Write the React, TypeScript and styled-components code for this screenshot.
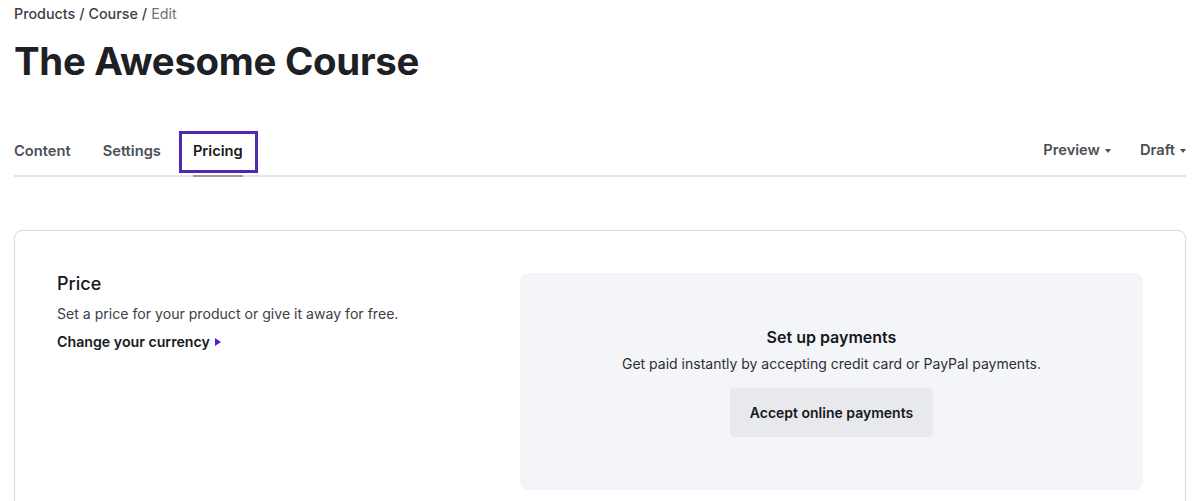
import styled, { createGlobalStyle } from "styled-components";

const GlobalStyle = createGlobalStyle`
  body {
    margin: 0;
    background: #ffffff;
    font-family: Inter, "Noto Sans", sans-serif;
    color: #1d2125;
  }
`;

const Page = styled.div`
  padding: 6px 14px 0;
`;

const Breadcrumb = styled.nav`
  display: flex;
  gap: 4px;
  font-size: 14.3px;
  line-height: 16px;
  font-weight: 500;
  color: #3c4046;
`;

const Crumb = styled.span<{ $current?: boolean }>`
  color: ${(p) => (p.$current ? "#6d7177" : "#3c4046")};
  font-weight: ${(p) => (p.$current ? 400 : 500)};
`;

const Title = styled.h1`
  margin: 17px 0 0;
  font-size: 38.4px;
  line-height: 44px;
  font-weight: 700;
  letter-spacing: -0.3px;
  color: #1d2125;
`;

const TabBar = styled.div`
  margin-top: 48px;
  display: flex;
  justify-content: space-between;
  align-items: stretch;
  border-bottom: 2px solid #e3e5e8;
`;

const TabList = styled.div`
  display: flex;
  gap: 32px;
`;

const Tab = styled.button<{ $active?: boolean }>`
  position: relative;
  border: none;
  background: none;
  padding: 10px 0 16px;
  margin-bottom: -2px;
  font-family: inherit;
  font-size: 14.7px;
  line-height: 18px;
  font-weight: 600;
  color: ${(p) => (p.$active ? "#16191c" : "#4a4f55")};
  cursor: pointer;

  &::after {
    content: "";
    display: ${(p) => (p.$active ? "block" : "none")};
    position: absolute;
    left: 0;
    right: 0;
    bottom: 0;
    height: 2px;
    background: #9a9da1;
  }

  &::before {
    content: "";
    display: ${(p) => (p.$active ? "block" : "none")};
    position: absolute;
    left: -14px;
    right: -15px;
    top: 0;
    bottom: 4px;
    border: 3px solid #5128b4;
  }
`;

const Menus = styled.div`
  display: flex;
  gap: 29px;
`;

const Menu = styled.button`
  display: flex;
  align-items: center;
  gap: 5px;
  border: none;
  background: none;
  padding: 10px 0 16px;
  font-family: inherit;
  font-size: 14.7px;
  line-height: 18px;
  font-weight: 600;
  color: #4a4f55;
  cursor: pointer;
`;

const Caret = styled.span`
  width: 0;
  height: 0;
  border-left: 3.5px solid transparent;
  border-right: 3.5px solid transparent;
  border-top: 4px solid #4a4f55;
  margin-top: 2px;
`;

const Card = styled.section`
  margin-top: 53px;
  border: 1px solid #d6d9dd;
  border-radius: 8px;
  padding: 42px 42px;
  display: grid;
  grid-template-columns: 1fr 623px;
  gap: 40px;
`;

const Info = styled.div`
  display: flex;
  flex-direction: column;
`;

const SectionTitle = styled.h2`
  margin: 0;
  font-size: 18px;
  line-height: 22px;
  font-weight: 500;
  color: #16191c;
`;

const Description = styled.p`
  margin: 9px 0 0;
  font-size: 14.1px;
  line-height: 20px;
  color: #3c4046;
`;

const TextLink = styled.a`
  margin-top: 8px;
  display: inline-flex;
  align-items: center;
  gap: 5px;
  font-size: 14.2px;
  line-height: 20px;
  font-weight: 600;
  color: #16191c;
  text-decoration: none;
`;

const LinkArrow = styled.span`
  width: 0;
  height: 0;
  border-top: 4.5px solid transparent;
  border-bottom: 4.5px solid transparent;
  border-left: 6px solid #4b22d6;
`;

const Panel = styled.div`
  background: #f4f5f9;
  border-radius: 8px;
  min-height: 217px;
  display: flex;
  flex-direction: column;
  align-items: center;
  justify-content: center;
  text-align: center;
  padding: 0 24px;
  box-sizing: border-box;
`;

const PanelTitle = styled.h3`
  margin: 0;
  font-size: 16px;
  line-height: 22px;
  font-weight: 600;
  color: #16191c;
`;

const PanelText = styled.p`
  margin: 6px 0 0;
  font-size: 14px;
  line-height: 20px;
  color: #2b2f34;
`;

const Button = styled.button`
  margin-top: 14px;
  border: none;
  border-radius: 4px;
  background: #e7e9ec;
  padding: 15px 20px;
  font-family: inherit;
  font-size: 14px;
  line-height: 19px;
  font-weight: 600;
  color: #16191c;
  cursor: pointer;
`;

export default function App() {
  return (
    <Page>
      <GlobalStyle />
      <Breadcrumb>
        <Crumb>Products</Crumb>
        <Crumb>/</Crumb>
        <Crumb>Course</Crumb>
        <Crumb>/</Crumb>
        <Crumb $current>Edit</Crumb>
      </Breadcrumb>

      <Title>The Awesome Course</Title>

      <TabBar>
        <TabList>
          <Tab>Content</Tab>
          <Tab>Settings</Tab>
          <Tab $active>Pricing</Tab>
        </TabList>
        <Menus>
          <Menu>
            Preview <Caret />
          </Menu>
          <Menu>
            Draft <Caret />
          </Menu>
        </Menus>
      </TabBar>

      <Card>
        <Info>
          <SectionTitle>Price</SectionTitle>
          <Description>Set a price for your product or give it away for free.</Description>
          <TextLink href="#">
            Change your currency <LinkArrow />
          </TextLink>
        </Info>
        <Panel>
          <PanelTitle>Set up payments</PanelTitle>
          <PanelText>Get paid instantly by accepting credit card or PayPal payments.</PanelText>
          <Button>Accept online payments</Button>
        </Panel>
      </Card>
    </Page>
  );
}
